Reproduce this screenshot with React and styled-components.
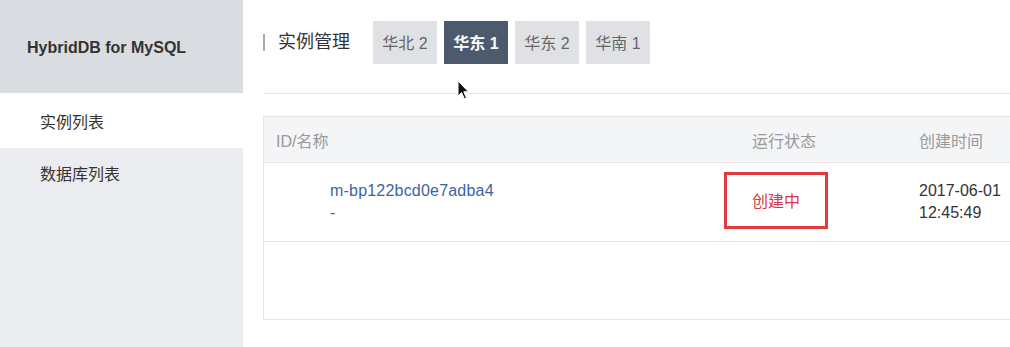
import React from "react";
import styled, { createGlobalStyle } from "styled-components";

const Global = createGlobalStyle`
  html, body { margin: 0; padding: 0; background: #fff; }
  body { font-family: "Liberation Sans", "Noto Sans CJK SC", Arial, sans-serif; color: #333; }
  #root { width: 1010px; height: 347px; overflow: hidden; }
`;

const Page = styled.div`
  display: flex;
  width: 1010px;
  height: 347px;
  overflow: hidden;
  position: relative;
`;

const Sidebar = styled.aside`
  width: 243px;
  flex: none;
  background: #ebecef;
  display: flex;
  flex-direction: column;
`;

const Brand = styled.div`
  height: 93px;
  background: #d9dde1;
  display: flex;
  align-items: center;
  padding-left: 27px;
  padding-top: 2px;
  font-size: 16px;
  font-weight: bold;
  color: #333;
  box-sizing: border-box;
`;

const MenuItem = styled.div`
  height: ${(p) => (p.$active ? 55 : 50)}px;
  display: flex;
  align-items: center;
  padding-left: 40px;
  font-size: 16px;
  color: #333;
  background: ${(p) => (p.$active ? "#fff" : "transparent")};
`;

const Main = styled.main`
  flex: 1;
  padding-left: 20px;
  overflow: hidden;
`;

const TopBar = styled.div`
  display: flex;
  align-items: center;
  border-bottom: 1px solid #e6e6e6;
  box-sizing: border-box;
  height: 94px;
  padding-bottom: 9px;
`;

const Title = styled.div`
  font-size: 18px;
  color: #333;
  padding-left: 15px;
  position: relative;
  margin-right: 23px;
  line-height: 22px;
  &::before {
    content: "";
    position: absolute;
    left: 0;
    top: 3px;
    width: 2px;
    height: 17px;
    background: #aaa;
  }
`;

const Tabs = styled.div`
  display: flex;
  gap: 7px;
`;

const Tab = styled.div`
  width: 64px;
  height: 43px;
  display: flex;
  align-items: center;
  justify-content: center;
  font-size: 16px;
  background: ${(p) => (p.$active ? "#4b5a6d" : "#dfe1e4")};
  color: ${(p) => (p.$active ? "#fff" : "#666")};
  font-weight: ${(p) => (p.$active ? "bold" : "normal")};
`;

const Table = styled.div`
  margin-top: 22px;
  width: 780px;
  border: 1px solid #e6e6e6;
  border-right: none;
`;

const Row = styled.div`
  display: grid;
  grid-template-columns: 476px 167px 1fr;
  height: ${(p) => p.$h}px;
  background: ${(p) => p.$bg || "#fff"};
  border-bottom: 1px solid #e6e6e6;
  box-sizing: border-box;
  &:last-child { border-bottom: none; }
`;

const HeadCell = styled.div`
  display: flex;
  align-items: center;
  padding-left: 12px;
  font-size: 16px;
  color: #999;
`;

const Cell = styled.div`
  display: flex;
  flex-direction: column;
  justify-content: center;
  padding-left: ${(p) => p.$pl || 12}px;
  font-size: 16px;
  line-height: 22px;
  color: #333;
  position: relative;
`;

const Link = styled.a`
  color: #3d63a3;
  text-decoration: none;
  letter-spacing: 0.2px;
`;

const Muted = styled.span`
  color: #666;
`;

const Status = styled.span`
  color: #d73a48;
`;

const Highlight = styled.div`
  position: absolute;
  left: -16px;
  top: 9px;
  width: 104px;
  height: 57px;
  border: 3px solid #e23b3e;
  box-sizing: border-box;
`;

const Cursor = styled.svg`
  position: absolute;
  left: 457px;
  top: 80px;
`;

export default function App() {
  return (
    <Page>
      <Global />
      <Sidebar>
        <Brand>HybridDB for MySQL</Brand>
        <MenuItem $active>实例列表</MenuItem>
        <MenuItem>数据库列表</MenuItem>
      </Sidebar>
      <Main>
        <TopBar>
          <Title>实例管理</Title>
          <Tabs>
            <Tab>华北 2</Tab>
            <Tab $active>华东 1</Tab>
            <Tab>华东 2</Tab>
            <Tab>华南 1</Tab>
          </Tabs>
        </TopBar>
        <Table>
          <Row $h={46} $bg="#f4f5f7">
            <HeadCell>ID/名称</HeadCell>
            <HeadCell>运行状态</HeadCell>
            <HeadCell>创建时间</HeadCell>
          </Row>
          <Row $h={79}>
            <Cell $pl={66}>
              <Link>m-bp122bcd0e7adba4</Link>
              <Muted>-</Muted>
            </Cell>
            <Cell>
              <Highlight />
              <Status>创建中</Status>
            </Cell>
            <Cell>
              <span>2017-06-01</span>
              <span>12:45:49</span>
            </Cell>
          </Row>
          <Row $h={77} />
        </Table>
      </Main>
      <Cursor width="14" height="20" viewBox="0 0 14 20">
        <path d="M1 1 L1 16 L4.5 12.5 L7.5 19 L9.5 18 L6.8 11.8 L11.5 11.8 Z" fill="#111" stroke="#fff" strokeWidth="1" />
      </Cursor>
    </Page>
  );
}
